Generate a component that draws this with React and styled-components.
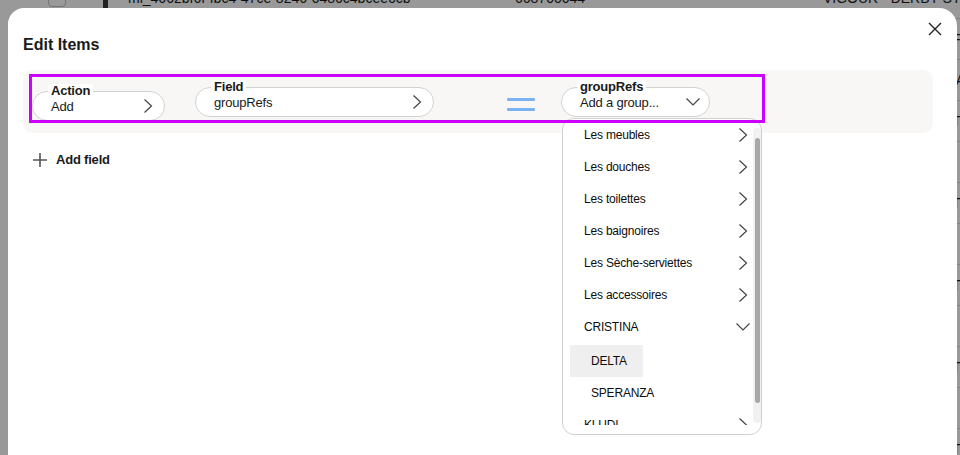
import React from "react";
import styled, { createGlobalStyle } from "styled-components";

const GlobalStyle = createGlobalStyle`
  html, body {
    margin: 0;
    padding: 0;
  }
  body {
    font-family: "Liberation Sans", Arial, sans-serif;
    color: #1a1a1a;
    background: #fff;
    overflow: hidden;
  }
`;

// rows of the table that sits behind the modal
const tableRows = [
  { id: "mi_4662bf6f-fbc4-47ce-8246-0486c4bcee6cb", ref: "668700044", name: "VIGOUR - DERBY STYLE" },
  { id: "mi_1b2c0f51-77a0-4c1e-9d3e-2f4f6d7e8a90", ref: "668700051", name: "VIGOUR - DERBY SFIX" },
  { id: "mi_2e6a8d03-5b1f-41c2-8a77-9c0d1e2f3a4b", ref: "668700068", name: "VIGOUR - CLIVIA SVAS" },
  { id: "mi_3f7b9e14-6c20-42d3-9b88-ad1e2f304b5c", ref: "668700075", name: "VIGOUR - DERBY ST  " },
  { id: "mi_4a8cae25-7d31-43e4-ac99-be2f30415c6d", ref: "668700082", name: "VIGOUR - CLIVIA  SJ" },
  { id: "mi_5b9dbf36-8e42-44f5-bdaa-cf3041526d7e", ref: "668700099", name: "VIGOUR - DERBY STY." },
  { id: "mi_6caec047-9f53-4506-cebb-d04152637e8f", ref: "668700105", name: "VIGOUR - INDIVO   I" },
  { id: "mi_7dbfd158-a064-4617-dfcc-e15263748f90", ref: "668700112", name: "VIGOUR - DERBY STYT" },
  { id: "mi_8ec0e269-b175-4728-e0dd-f263748590a1", ref: "668700129", name: "VIGOUR - CLIVIA  SV" },
  { id: "mi_9fd1f37a-c286-4839-f1ee-0374859601b2", ref: "668700136", name: "VIGOUR - DERBY STJ" },
  { id: "mi_a0e2048b-d397-494a-02ff-148596a712c3", ref: "668700143", name: "VIGOUR - CLIVIA  SP" },
  { id: "mi_b1f3159c-e4a8-4a5b-1300-2596a7b823d4", ref: "668700150", name: "VIGOUR - DERBY STJ" },
];

const menuItems = [
  { label: "Les meubles", kind: "closed" },
  { label: "Les douches", kind: "closed" },
  { label: "Les toilettes", kind: "closed" },
  { label: "Les baignoires", kind: "closed" },
  { label: "Les Sèche-serviettes", kind: "closed" },
  { label: "Les accessoires", kind: "closed" },
  { label: "CRISTINA", kind: "open" },
  { label: "DELTA", kind: "sub", active: true },
  { label: "SPERANZA", kind: "sub" },
  { label: "KLUDI", kind: "closed" },
];

const ChevronRight = () => (
  <svg width="16" height="16" viewBox="0 0 16 16" fill="none">
    <polyline points="4.5,1.5 11.5,8 4.5,14.5" stroke="#444" strokeWidth="1.2" />
  </svg>
);

const ChevronDown = () => (
  <svg width="16" height="16" viewBox="0 0 16 16" fill="none">
    <polyline points="1.5,4.5 8,11 14.5,4.5" stroke="#444" strokeWidth="1.2" />
  </svg>
);

const EditItems = () => {
  return (
    <Page>
      <GlobalStyle />
      <Table>
        {tableRows.map((row) => (
          <TableRow key={row.id}>
            <span />
            <Checkbox />
            <Thumb />
            <span>{row.id}</span>
            <span>{row.ref}</span>
            <span>{row.name}</span>
          </TableRow>
        ))}
      </Table>
      <Overlay />

      <Modal>
        <Header>
          <Title>Edit Items</Title>
          <CloseButton aria-label="Close">
            <svg width="14" height="14" viewBox="0 0 14 14" fill="none">
              <path d="M1 1 L13 13 M13 1 L1 13" stroke="#222" strokeWidth="1.4" />
            </svg>
          </CloseButton>
        </Header>

        <Panel>
          <FieldRow>
            <Pill $width={133} $offset={0} $top={4}>
              <Label>Action</Label>
              <span>Add</span>
              <ChevronRight />
            </Pill>
            <Pill $width={239} $offset={30}>
              <Label>Field</Label>
              <span>groupRefs</span>
              <ChevronRight />
            </Pill>
            <Equals>
              <span />
              <span />
            </Equals>
            <Pill $width={149} $offset={26}>
              <Label>groupRefs</Label>
              <span>Add a group...</span>
              <ChevronDown />
              <Menu>
                <MenuList>
                  {menuItems.map((item) =>
                    item.kind === "sub" ? (
                      <SubItem key={item.label} $active={item.active}>
                        {item.label}
                      </SubItem>
                    ) : (
                      <MenuItem key={item.label}>
                        <span>{item.label}</span>
                        {item.kind === "open" ? <ChevronDown /> : <ChevronRight />}
                      </MenuItem>
                    )
                  )}
                </MenuList>
                <ScrollTrack>
                  <ScrollThumb />
                </ScrollTrack>
              </Menu>
            </Pill>
          </FieldRow>
        </Panel>

        <AddField>
          <svg width="14" height="14" viewBox="0 0 14 14" fill="none">
            <path d="M7 0 V14 M0 7 H14" stroke="#555" strokeWidth="1.6" />
          </svg>
          Add field
        </AddField>
      </Modal>
    </Page>
  );
};

const Page = styled.div`
  width: 960px;
  height: 455px;
  overflow: hidden;
`;

const Table = styled.div`
  margin: -22px 0 0 8px;
`;

const TableRow = styled.div`
  display: grid;
  grid-template-columns: 40px 55px 25px 387px 308px 1fr;
  align-items: center;
  height: 41px;
  box-sizing: border-box;
  border-bottom: 1px solid #d8d8d8;
  font-size: 14px;
  white-space: nowrap;
`;

const Checkbox = styled.span`
  width: 16px;
  height: 16px;
  border: 1px solid #c4c4c4;
  border-radius: 4px;
  background: #fff;
`;

const Thumb = styled.span`
  width: 5px;
  height: 34px;
  background: #3a3a3a;
`;

const Overlay = styled.div`
  position: fixed;
  inset: 0;
  background: rgba(0, 0, 0, 0.4);
`;

const Modal = styled.div`
  position: fixed;
  top: 8px;
  left: 8px;
  width: 949px;
  height: 480px;
  box-sizing: border-box;
  padding: 27px 24px 0 15px;
  background: #fff;
  border-radius: 16px 18px 0 0;
`;

const Header = styled.div`
  display: flex;
  justify-content: space-between;
  align-items: flex-start;
`;

const Title = styled.h2`
  margin: 0;
  font-size: 16px;
  line-height: 20px;
  font-weight: 700;
  color: #1a1a1a;
`;

const CloseButton = styled.button`
  display: flex;
  margin: -13px -9px 0 0;
  padding: 0;
  border: none;
  background: none;
  cursor: pointer;
`;

const Panel = styled.div`
  margin-top: 15px;
  padding: 7px 9px 13px;
  background: #f8f7f6;
  border-radius: 10px;
`;

const FieldRow = styled.div`
  position: relative;
  display: flex;
  align-items: flex-start;
  width: 730px;
  height: 43px;
  box-sizing: border-box;
  padding-top: 10px;

  &::after {
    content: "";
    position: absolute;
    inset: -3px;
    border: 3px solid #cc00ff;
    z-index: 3;
    pointer-events: none;
  }
`;

const Pill = styled.div`
  position: relative;
  display: flex;
  align-items: center;
  justify-content: space-between;
  flex: none;
  width: ${(p) => p.$width}px;
  height: 30px;
  margin-left: ${(p) => p.$offset}px;
  margin-top: ${(p) => p.$top || 0}px;
  box-sizing: border-box;
  padding: 0 8px 0 18px;
  border: 1px solid #d2d2d2;
  border-radius: 15px;
  background: #fff;
  font-size: 13px;
  letter-spacing: -0.2px;
  color: #1a1a1a;

  svg {
    flex: none;
  }
`;

const Label = styled.span`
  position: absolute;
  top: -8px;
  left: 15px;
  padding: 0 3px;
  background: #fff;
  border-radius: 3px;
  font-size: 13px;
  line-height: 14px;
  font-weight: 700;
`;

const Equals = styled.div`
  display: flex;
  flex-direction: column;
  gap: 7px;
  margin: 11px 0 0 73px;

  span {
    width: 28px;
    height: 3px;
    border-radius: 1px;
    background: #7ab3f3;
  }
`;

const Menu = styled.div`
  position: absolute;
  top: calc(100% + 2px);
  left: 0;
  z-index: 2;
  display: flex;
  width: 200px;
  height: 317px;
  box-sizing: border-box;
  padding-bottom: 9px;
  border: 1px solid #d0d0d0;
  border-radius: 12px;
  background: #fff;
  overflow: hidden;
  letter-spacing: -0.2px;
`;

const MenuList = styled.div`
  flex: 1;
  overflow: hidden;
`;

const ScrollTrack = styled.div`
  flex: none;
  width: 8px;
  margin: 9px 0 2px;
  box-sizing: border-box;
  padding: 10px 1px 0 2px;
  border-radius: 4px;
  background: #f1f1f1;
`;

const ScrollThumb = styled.div`
  height: 265px;
  border-radius: 3px;
  background: #a8a8a8;
`;

const MenuItem = styled.div`
  display: flex;
  align-items: center;
  justify-content: space-between;
  height: 32px;
  padding: 0 2px 0 21px;
  font-size: 12px;
  color: #0d0d0d;
`;

const SubItem = styled.div`
  display: flex;
  align-items: center;
  width: fit-content;
  height: 32px;
  margin-left: 7px;
  padding: 0 16px 0 21px;
  font-size: 12px;
  color: #0d0d0d;
  background: ${(p) => (p.$active ? "#efefef" : "transparent")};

  ${MenuItem} + & {
    margin-top: 2px;
  }
`;

const AddField = styled.button`
  display: flex;
  align-items: center;
  gap: 9px;
  margin: 19px 0 0 10px;
  padding: 0;
  border: none;
  background: none;
  font-family: inherit;
  font-size: 13px;
  font-weight: 700;
  letter-spacing: -0.2px;
  color: #1a1a1a;
  cursor: pointer;
`;

export default EditItems;
